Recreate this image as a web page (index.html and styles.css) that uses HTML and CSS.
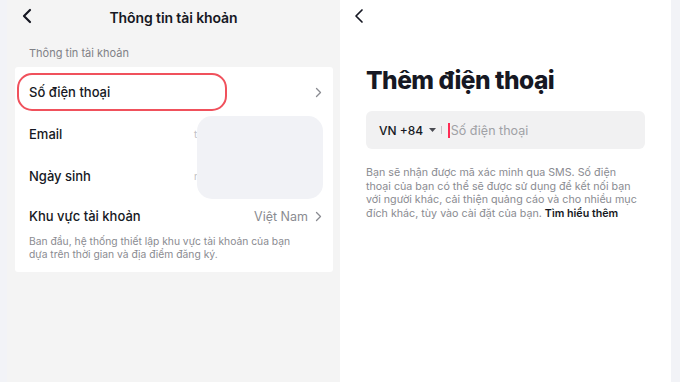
FILE: index.html
```html
<!DOCTYPE html>
<html lang="vi">
<head>
<meta charset="utf-8">
<link rel="stylesheet" href="styles.css">
</head>
<body>
<div class="page">
  <div class="edge edge-left"></div>
  <section class="panel-left">
    <header class="topbar">
      <svg class="back" width="12" height="16" viewBox="0 0 12 16"><path d="M9 2 L3 8 L9 14" fill="none" stroke="#161823" stroke-width="2.2" stroke-linecap="round" stroke-linejoin="round"/></svg>
      <h1 class="title">Thông tin tài khoản</h1>
    </header>
    <div class="section-label">Thông tin tài khoản</div>
    <div class="card">
      <div class="row row-phone">
        <span class="row-label">Số điện thoại</span>
        <svg class="chev" width="7" height="11" viewBox="0 0 7 11"><path d="M1.5 1.5 L5.5 5.5 L1.5 9.5" fill="none" stroke="#8a8b91" stroke-width="1.3" stroke-linecap="round" stroke-linejoin="round"/></svg>
        <div class="highlight"></div>
      </div>
      <div class="row">
        <span class="row-label">Email</span>
        <span class="hidden-val">t</span>
      </div>
      <div class="row">
        <span class="row-label">Ngày sinh</span>
        <span class="hidden-val">n</span>
      </div>
      <div class="mask"></div>
      <div class="row row-region">
        <span class="row-label">Khu vực tài khoản</span>
        <span class="row-value">Việt Nam</span>
        <svg class="chev" width="7" height="11" viewBox="0 0 7 11"><path d="M1.5 1.5 L5.5 5.5 L1.5 9.5" fill="none" stroke="#8a8b91" stroke-width="1.3" stroke-linecap="round" stroke-linejoin="round"/></svg>
      </div>
      <p class="note">Ban đầu, hệ thống thiết lập khu vực tài khoản của bạn dựa trên thời gian và địa điểm đăng ký.</p>
    </div>
  </section>
  <section class="panel-right">
    <svg class="back back-thin" width="12" height="16" viewBox="0 0 12 16"><path d="M9 2 L3 8 L9 14" fill="none" stroke="#161823" stroke-width="1.7" stroke-linecap="round" stroke-linejoin="round"/></svg>
    <h2 class="big-title">Thêm điện thoại</h2>
    <div class="phone-input">
      <span class="country">VN +84</span>
      <svg class="caret" width="7" height="4" viewBox="0 0 7 4"><path d="M0 0 H7 L3.5 4 Z" fill="#4a4b52"/></svg>
      <span class="sep"></span>
      <span class="cursor"></span>
      <span class="placeholder">Số điện thoại</span>
    </div>
    <p class="info">Bạn sẽ nhận được mã xác minh qua SMS. Số điện thoại của bạn có thể sẽ được sử dụng để kết nối bạn với người khác, cải thiện quảng cáo và cho nhiều mục đích khác, tùy vào cài đặt của bạn. <b>Tìm hiểu thêm</b></p>
  </section>
  <div class="edge edge-right"></div>
</div>
</body>
</html>
```
FILE: styles.css
```css
* { box-sizing: border-box; }
html, body { margin: 0; padding: 0; }
body {
  width: 680px;
  height: 382px;
  overflow: hidden;
  font-family: Inter, "Noto Sans", "Liberation Sans", sans-serif;
  color: #161823;
}
.page {
  display: flex;
  height: 382px;
}
.edge { background: #f2f3f7; }
.edge-left { width: 7px; }
.edge-right { width: 9px; }

.panel-left {
  width: 333px;
  background: #f4f4f4;
  display: flex;
  flex-direction: column;
}
.topbar {
  position: relative;
  height: 34px;
  display: flex;
  align-items: center;
  justify-content: center;
}
.topbar .back {
  position: absolute;
  left: 14px;
  top: 8px;
}
.title {
  margin: 0;
  font-size: 14px;
  font-weight: 600;
  letter-spacing: -0.1px;
}
.section-label {
  margin: 12px 0 0 22px;
  font-size: 11px;
  color: #808186;
  height: 15px;
  line-height: 15px;
}
.card {
  position: relative;
  margin: 6px 7px 0 8px;
  background: #fff;
  border-radius: 3px;
  padding: 4px 0 12px;
}
.row {
  position: relative;
  height: 42px;
  display: flex;
  align-items: center;
  padding: 0 11px 0 14px;
}
.row-label {
  font-size: 13px;
  font-weight: 500;
  flex: 1;
}
.row-value {
  font-size: 12.5px;
  color: #8a8b91;
  margin-right: 7px;
}
.chev { display: block; }
.highlight {
  position: absolute;
  left: 2px;
  top: 2px;
  width: 210px;
  height: 38px;
  border: 2px solid #f0515c;
  border-radius: 15px;
}
.hidden-val {
  position: absolute;
  left: 179px;
  font-size: 10px;
  color: #c0c1c5;
}
.mask {
  position: absolute;
  left: 182px;
  top: 49px;
  width: 126px;
  height: 83px;
  background: #f1f2f6;
  border-radius: 15px;
}
.row-region { height: 38px; }
.note {
  margin: 0 0 0 14px;
  padding-right: 24px;
  font-size: 10.3px;
  line-height: 12.5px;
  color: #8a8b91;
}

.panel-right {
  width: 331px;
  background: #fff;
  padding: 0 26px 0 26px;
  display: flex;
  flex-direction: column;
}
.back-thin {
  margin: 8px 0 0 -13px;
}
.big-title {
  margin: 41px 0 0 0;
  font-size: 24.5px;
  font-weight: 800;
  letter-spacing: -0.5px;
  line-height: 30px;
}
.phone-input {
  margin-top: 16px;
  height: 38px;
  background: #f1f1f2;
  border-radius: 6px;
  display: flex;
  align-items: center;
  padding-left: 13px;
}
.country {
  font-size: 12px;
  font-weight: 500;
}
.caret { margin-left: 6px; }
.sep {
  width: 1px;
  height: 8px;
  background: #c4c5c9;
  margin-left: 5px;
}
.cursor {
  width: 1.5px;
  height: 15px;
  background: #fe2c55;
  margin-left: 6px;
}
.placeholder {
  font-size: 12.5px;
  color: #a0a1a6;
  margin-left: 1px;
}
.info {
  margin: 17px 0 0 0;
  max-width: 272px;
  font-size: 10.7px;
  line-height: 13.5px;
  color: #8a8b91;
}
.info b {
  color: #161823;
  font-weight: 600;
}
```
